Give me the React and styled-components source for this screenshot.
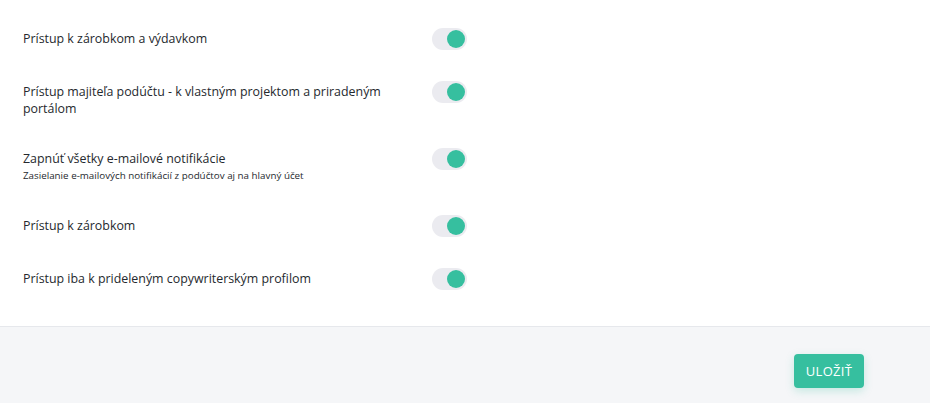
import React, { useState } from "react";
import styled, { createGlobalStyle } from "styled-components";

const GlobalStyle = createGlobalStyle`
  html, body {
    margin: 0;
    padding: 0;
    background: #fff;
  }
  body {
    font-family: "Open Sans", "Liberation Sans", sans-serif;
    color: #212529;
  }
`;

const settings = [
  { id: "income", label: "Prístup k zárobkom a výdavkom" },
  {
    id: "owner",
    label: "Prístup majiteľa podúčtu - k vlastným projektom a priradeným portálom",
  },
  {
    id: "emails",
    label: "Zapnúť všetky e-mailové notifikácie",
    hint: "Zasielanie e-mailových notifikácií z podúčtov aj na hlavný účet",
  },
  { id: "earnings", label: "Prístup k zárobkom" },
  { id: "profiles", label: "Prístup iba k prideleným copywriterským profilom" },
];

function Toggle({ checked, onChange }) {
  return (
    <Track $on={checked} onClick={onChange} role="switch" aria-checked={checked}>
      <Knob $on={checked} />
    </Track>
  );
}

function SettingsForm() {
  const [values, setValues] = useState(
    Object.fromEntries(settings.map((s) => [s.id, true]))
  );

  const toggle = (id) => setValues((prev) => ({ ...prev, [id]: !prev[id] }));

  return (
    <Page>
      <SettingsList>
        {settings.map((s) => (
          <SettingRow key={s.id}>
            <LabelBlock>
              <Label>{s.label}</Label>
              {s.hint && <Hint>{s.hint}</Hint>}
            </LabelBlock>
            <Toggle checked={values[s.id]} onChange={() => toggle(s.id)} />
          </SettingRow>
        ))}
      </SettingsList>
      <Footer>
        <SaveButton>ULOŽIŤ</SaveButton>
      </Footer>
    </Page>
  );
}

export default function App() {
  return (
    <>
      <GlobalStyle />
      <SettingsForm />
    </>
  );
}

const Page = styled.div`
  width: 930px;
  height: 403px;
  display: flex;
  flex-direction: column;
`;

const SettingsList = styled.div`
  display: flex;
  flex-direction: column;
  gap: 31px;
  padding: 28px 0 0 23px;
  height: 326px;
  box-sizing: border-box;
`;

const SettingRow = styled.div`
  display: flex;
  align-items: flex-start;
`;

const LabelBlock = styled.div`
  width: 409px;
  padding-top: 2px;
  padding-right: 20px;
  box-sizing: border-box;
`;

const Label = styled.div`
  font-size: 12.4px;
  line-height: 17px;
  color: #25292e;
`;

const Hint = styled.div`
  font-size: 9.8px;
  line-height: 17px;
  color: #25292e;
`;

const Track = styled.div`
  width: 35px;
  height: 22px;
  border-radius: 11px;
  background: #ebebf0;
  position: relative;
  cursor: pointer;
  flex-shrink: 0;
`;

const Knob = styled.span`
  position: absolute;
  top: 2px;
  left: ${(p) => (p.$on ? "15px" : "2px")};
  width: 18px;
  height: 18px;
  border-radius: 50%;
  background: ${(p) => (p.$on ? "#36bf9f" : "#fff")};
`;

const Footer = styled.div`
  flex: 1;
  background: #f5f6f8;
  border-top: 1px solid #e6e8ec;
  display: flex;
  justify-content: flex-end;
  align-items: flex-start;
  padding: 27px 66px 0 0;
`;

const SaveButton = styled.button`
  width: 70px;
  height: 34px;
  border: none;
  border-radius: 4px;
  background: #36bf9f;
  color: #fff;
  font-family: "Open Sans", "Liberation Sans", sans-serif;
  font-size: 13px;
  letter-spacing: 0.3px;
  box-shadow: 0 3px 8px rgba(54, 191, 159, 0.25);
  cursor: pointer;
`;
